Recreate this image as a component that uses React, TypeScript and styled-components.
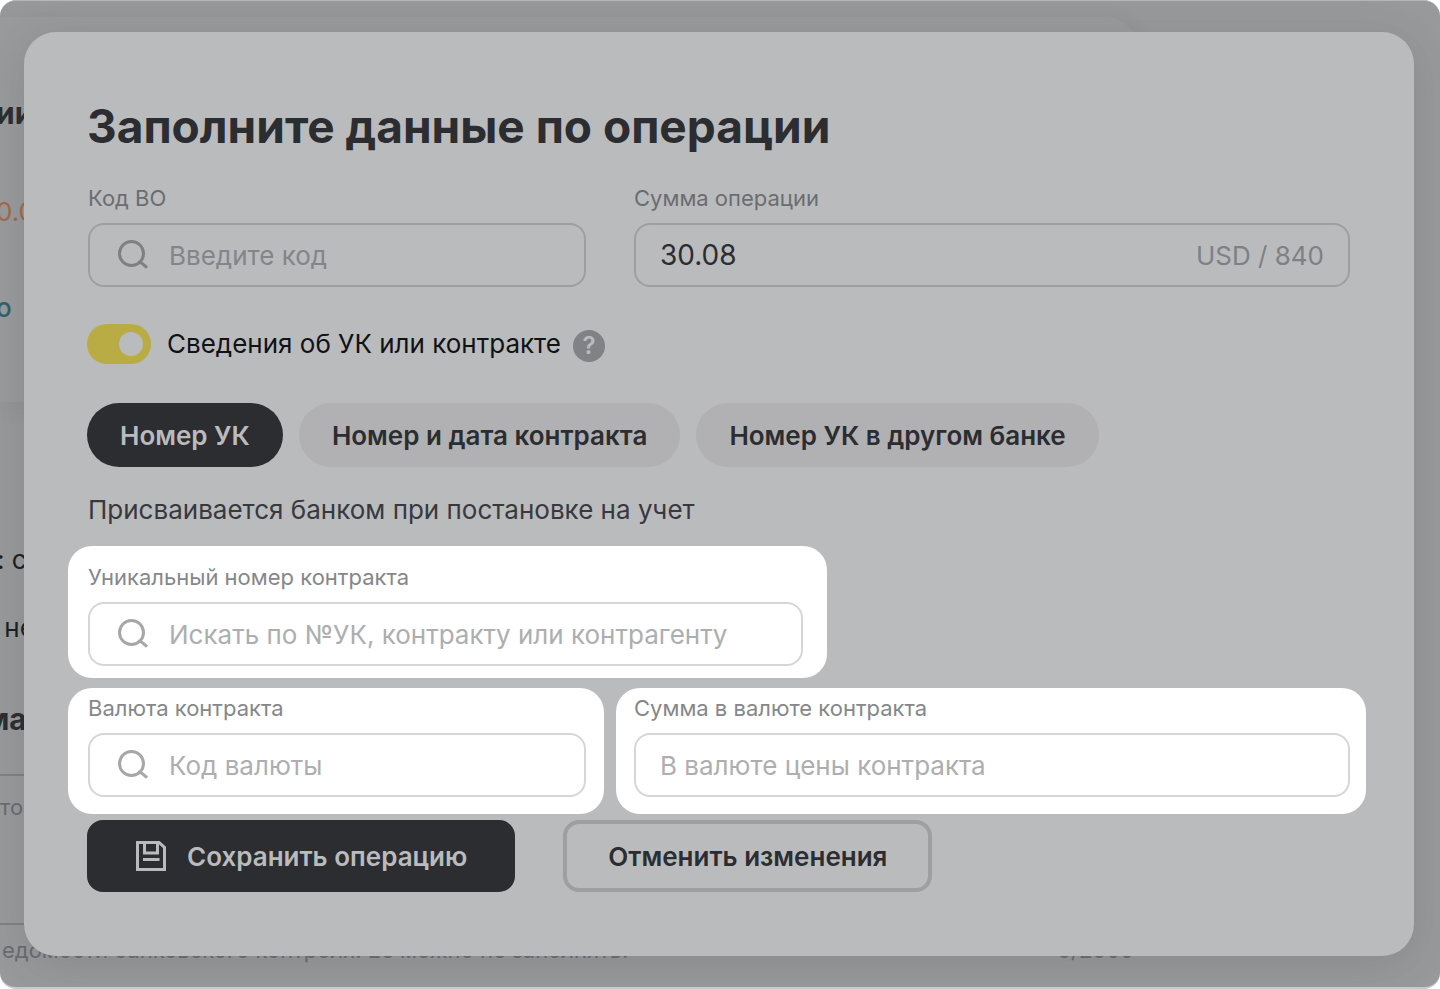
import React, { useState } from 'react';
import styled, { createGlobalStyle, css } from 'styled-components';

const GlobalStyle = createGlobalStyle`
  *, *::before, *::after { box-sizing: border-box; }
  body { margin: 0; background: #fff; }
  body, button, input { font-family: Inter, Roboto, sans-serif; }
  h1, p { margin: 0; }
`;

const Screen = styled.div`
  display: grid;
  grid-template-columns: minmax(0, 1fr);
  min-height: 100vh;
  border-top: 1px solid #b4b5b7;
  border-bottom: 2px solid #c9cacb;
  border-radius: 16px;
  background: #97999b;
  overflow: hidden;
`;

const Backdrop = styled.div`
  grid-area: 1 / 1;
  display: flex;
  flex-direction: column;
  padding-top: 16px;
  overflow: hidden;
  white-space: nowrap;
  user-select: none;
`;

const BackCard = styled.div`
  width: 79%;
  height: 385px;
  margin-bottom: 138px;
  padding-top: 76px;
  border-radius: 0 32px 32px 0;
  background: #989a9c;
  box-shadow: 0 4px 24px rgba(40, 42, 46, 0.07);
`;

const tones = {
  heading: css`color: #2c2d31; font-size: 30px; font-weight: 700; text-indent: -4px;`,
  section: css`color: #2c2d31; font-size: 30px; font-weight: 700; text-indent: -15px;`,
  amount: css`color: #a5674c; font-size: 26px; text-indent: -4px;`,
  link: css`color: #30606e; font-size: 26px; font-weight: 500; text-indent: -4px;`,
  text: css`color: #1c1d1f; font-size: 26px; text-indent: -3px;`,
  muted: css`color: #696b6f; font-size: 22px;`,
};

const Snippet = styled.p<{ $tone: keyof typeof tones; $gap: number }>`
  line-height: 40px;
  margin-bottom: ${(p) => p.$gap}px;
  ${(p) => tones[p.$tone]}
`;

const Rule = styled.div<{ $gap: number }>`
  width: 79%;
  height: 2px;
  flex: none;
  background: #7f8183;
  margin-bottom: ${(p) => p.$gap}px;
`;

const CounterRow = styled.div`
  display: flex;
  justify-content: space-between;
  padding: 0 306px 0 2px;
`;

const Dialog = styled.section`
  grid-area: 1 / 1;
  position: relative;
  align-self: start;
  margin: 31px 26px 31px 24px;
  padding: 66px 48px 64px 44px;
  border-radius: 32px;
  background: #babbbd;
  box-shadow: 0 8px 40px rgba(60, 62, 66, 0.16);
`;

const Title = styled.h1`
  padding-left: 19px;
  font-size: 46px;
  line-height: 56px;
  font-weight: 700;
  color: #2c2d31;
`;

const Row = styled.div<{ $top: number }>`
  display: grid;
  grid-template-columns: minmax(0, 536fr) minmax(0, 750fr);
  gap: 12px;
  margin-top: ${(p) => p.$top}px;
`;

const Cell = styled.div<{ $lit?: boolean; $wide?: boolean }>`
  padding: 0 16px 0 18px;
  &:first-child { padding: 0 18px 0 20px; }
  ${(p) => p.$lit && css`
    &, &:first-child {
      padding-top: 6px;
      padding-bottom: 17px;
    }
    border-radius: 24px;
    background: #fff;
  `}
  ${(p) => p.$wide && css`
    width: 58.5%;
    margin-top: 20px;
    &, &:first-child, &:not(:first-child) {
      padding: 17px 24px 12px 20px;
    }
  `}
`;

const Label = styled.label<{ $lit?: boolean }>`
  display: block;
  margin-bottom: 11px;
  font-size: 22px;
  line-height: 28px;
  color: ${(p) => (p.$lit ? '#85878b' : '#6b6d71')};
`;

const Control = styled.div<{ $lit?: boolean; $icon?: boolean }>`
  display: flex;
  align-items: center;
  gap: 19px;
  height: 64px;
  padding: 0 24px 0 ${(p) => (p.$icon ? 28 : 24)}px;
  border: 2px solid ${(p) => (p.$lit ? '#d5d6d8' : '#9e9fa1')};
  border-radius: 16px;
  color: ${(p) => (p.$lit ? '#a6a7a9' : '#7e8083')};
  font-size: 26px;
`;

const Input = styled.input<{ $lit?: boolean }>`
  flex: 1;
  min-width: 0;
  height: 100%;
  padding: 0;
  border: 0;
  outline: 0;
  background: transparent;
  font-size: 26px;
  color: #2c2d31;
  &::placeholder {
    color: ${(p) => (p.$lit ? '#adaeb0' : '#838588')};
    opacity: 1;
  }
`;

const Amount = styled(Input)`
  font-size: 28px;
`;

const ToggleRow = styled.div`
  display: flex;
  align-items: center;
  height: 40px;
  margin-top: 37px;
  padding-left: 19px;
`;

const Switch = styled.input`
  appearance: none;
  display: flex;
  align-items: center;
  justify-content: flex-end;
  width: 64px;
  height: 40px;
  margin: 0 16px 0 0;
  padding: 0 8px;
  border-radius: 20px;
  background: #b9ac45;
  cursor: pointer;
  &::before {
    content: '';
    width: 24px;
    height: 24px;
    border-radius: 50%;
    background: #babbbd;
  }
  &:not(:checked) {
    justify-content: flex-start;
    background: #97999b;
  }
`;

const SwitchLabel = styled.label`
  font-size: 26px;
  line-height: 32px;
  color: #111214;
`;

const Help = styled.button`
  width: 32px;
  height: 32px;
  margin: 4px 0 0 12px;
  padding: 0;
  border: 0;
  border-radius: 50%;
  background: #808286;
  color: #babbbd;
  font-size: 24px;
  line-height: 32px;
  font-weight: 600;
`;

const Chips = styled.div`
  display: flex;
  gap: 16px;
  margin-top: 39px;
  padding-left: 19px;
`;

const Chip = styled.button<{ $active?: boolean }>`
  height: 64px;
  padding: 0 33px;
  border: 0;
  border-radius: 32px;
  background: ${(p) => (p.$active ? '#2c2d31' : '#b1b1b3')};
  color: ${(p) => (p.$active ? '#babbbd' : '#2c2d31')};
  font-size: 26px;
  font-weight: 600;
  white-space: nowrap;
`;

const Hint = styled.p`
  margin-top: 27px;
  padding-left: 20px;
  font-size: 26px;
  line-height: 32px;
  color: #38393d;
`;

const Actions = styled.div`
  display: flex;
  gap: 48px;
  margin-top: 6px;
  padding-left: 19px;
`;

const Action = styled.button<{ $primary?: boolean }>`
  display: flex;
  align-items: center;
  gap: 20px;
  height: 72px;
  padding: 0 ${(p) => (p.$primary ? 44 : 41)}px;
  border: 4px solid ${(p) => (p.$primary ? '#2c2d31' : '#9e9fa1')};
  border-radius: 16px;
  background: ${(p) => (p.$primary ? '#2c2d31' : 'transparent')};
  color: ${(p) => (p.$primary ? '#babbbd' : '#2c2d31')};
  font-size: 26px;
  font-weight: 600;
  white-space: nowrap;
`;

const Icon = styled.svg`
  flex: none;
  width: 32px;
  height: 32px;
`;

const SearchIcon = () => (
  <Icon viewBox="0 0 32 32" fill="none" stroke="currentColor" strokeWidth="3" aria-hidden="true">
    <circle cx="13.5" cy="14.5" r="12" />
    <path d="M20 23.2 Q23.5 22.8 29 28.8" />
  </Icon>
);

const SaveIcon = () => (
  <Icon viewBox="0 0 32 32" fill="none" stroke="currentColor" strokeWidth="3" aria-hidden="true">
    <path d="M2.5 2.5 H24 L29.5 7.5 V29.5 H2.5 Z" />
    <path d="M9.5 3 V13 H22.5 V3" />
    <path d="M8 19.5 H24.5" />
  </Icon>
);

type FieldProps = { id: string; label: string; placeholder?: string; search?: boolean; lit?: boolean };

const Field = ({ id, label, placeholder, search, lit }: FieldProps) => (
  <>
    <Label htmlFor={id} $lit={lit}>{label}</Label>
    <Control $lit={lit} $icon={search}>
      {search && <SearchIcon />}
      <Input id={id} placeholder={placeholder} $lit={lit} />
    </Control>
  </>
);

const modes = ['Номер УК', 'Номер и дата контракта', 'Номер УК в другом банке'];

export default function App() {
  const [mode, setMode] = useState(0);
  return (
    <>
      <GlobalStyle />
      <Screen>
        <Backdrop aria-hidden="true">
          <BackCard>
            <Snippet $tone="heading" $gap={59}>ии</Snippet>
            <Snippet $tone="amount" $gap={56}>0.0</Snippet>
            <Snippet $tone="link" $gap={0}>о</Snippet>
          </BackCard>
          <Snippet $tone="text" $gap={28}>: с</Snippet>
          <Snippet $tone="text" $gap={51}>&nbsp;не</Snippet>
          <Snippet $tone="section" $gap={35}>ма</Snippet>
          <Rule $gap={11} />
          <Snippet $tone="muted" $gap={96}>тор</Snippet>
          <Rule $gap={5} />
          <CounterRow>
            <Snippet $tone="muted" $gap={0}>едомости банковского контроля. Ее можно не заполнять.</Snippet>
            <Snippet $tone="muted" $gap={0}>0/2000</Snippet>
          </CounterRow>
        </Backdrop>
        <Dialog role="dialog" aria-labelledby="dialog-title">
          <Title id="dialog-title">Заполните данные по операции</Title>
          <Row $top={30}>
            <Cell>
              <Field id="code" label="Код ВО" placeholder="Введите код" search />
            </Cell>
            <Cell>
              <Label htmlFor="amount">Сумма операции</Label>
              <Control>
                <Amount id="amount" defaultValue="30.08" />
                <span>USD / 840</span>
              </Control>
            </Cell>
          </Row>
          <ToggleRow>
            <Switch type="checkbox" id="contract-info" defaultChecked />
            <SwitchLabel htmlFor="contract-info">Сведения об УК или контракте</SwitchLabel>
            <Help type="button" aria-label="Справка">?</Help>
          </ToggleRow>
          <Chips>
            {modes.map((text, i) => (
              <Chip key={text} type="button" $active={i === mode} onClick={() => setMode(i)}>{text}</Chip>
            ))}
          </Chips>
          <Hint>Присваивается банком при постановке на учет</Hint>
          <Cell $lit $wide>
            <Field id="contract" label="Уникальный номер контракта" placeholder="Искать по №УК, контракту или контрагенту" search lit />
          </Cell>
          <Row $top={10}>
            <Cell $lit>
              <Field id="currency" label="Валюта контракта" placeholder="Код валюты" search lit />
            </Cell>
            <Cell $lit>
              <Field id="contract-sum" label="Сумма в валюте контракта" placeholder="В валюте цены контракта" lit />
            </Cell>
          </Row>
          <Actions>
            <Action type="button" $primary><SaveIcon />Сохранить операцию</Action>
            <Action type="button">Отменить изменения</Action>
          </Actions>
        </Dialog>
      </Screen>
    </>
  );
}
